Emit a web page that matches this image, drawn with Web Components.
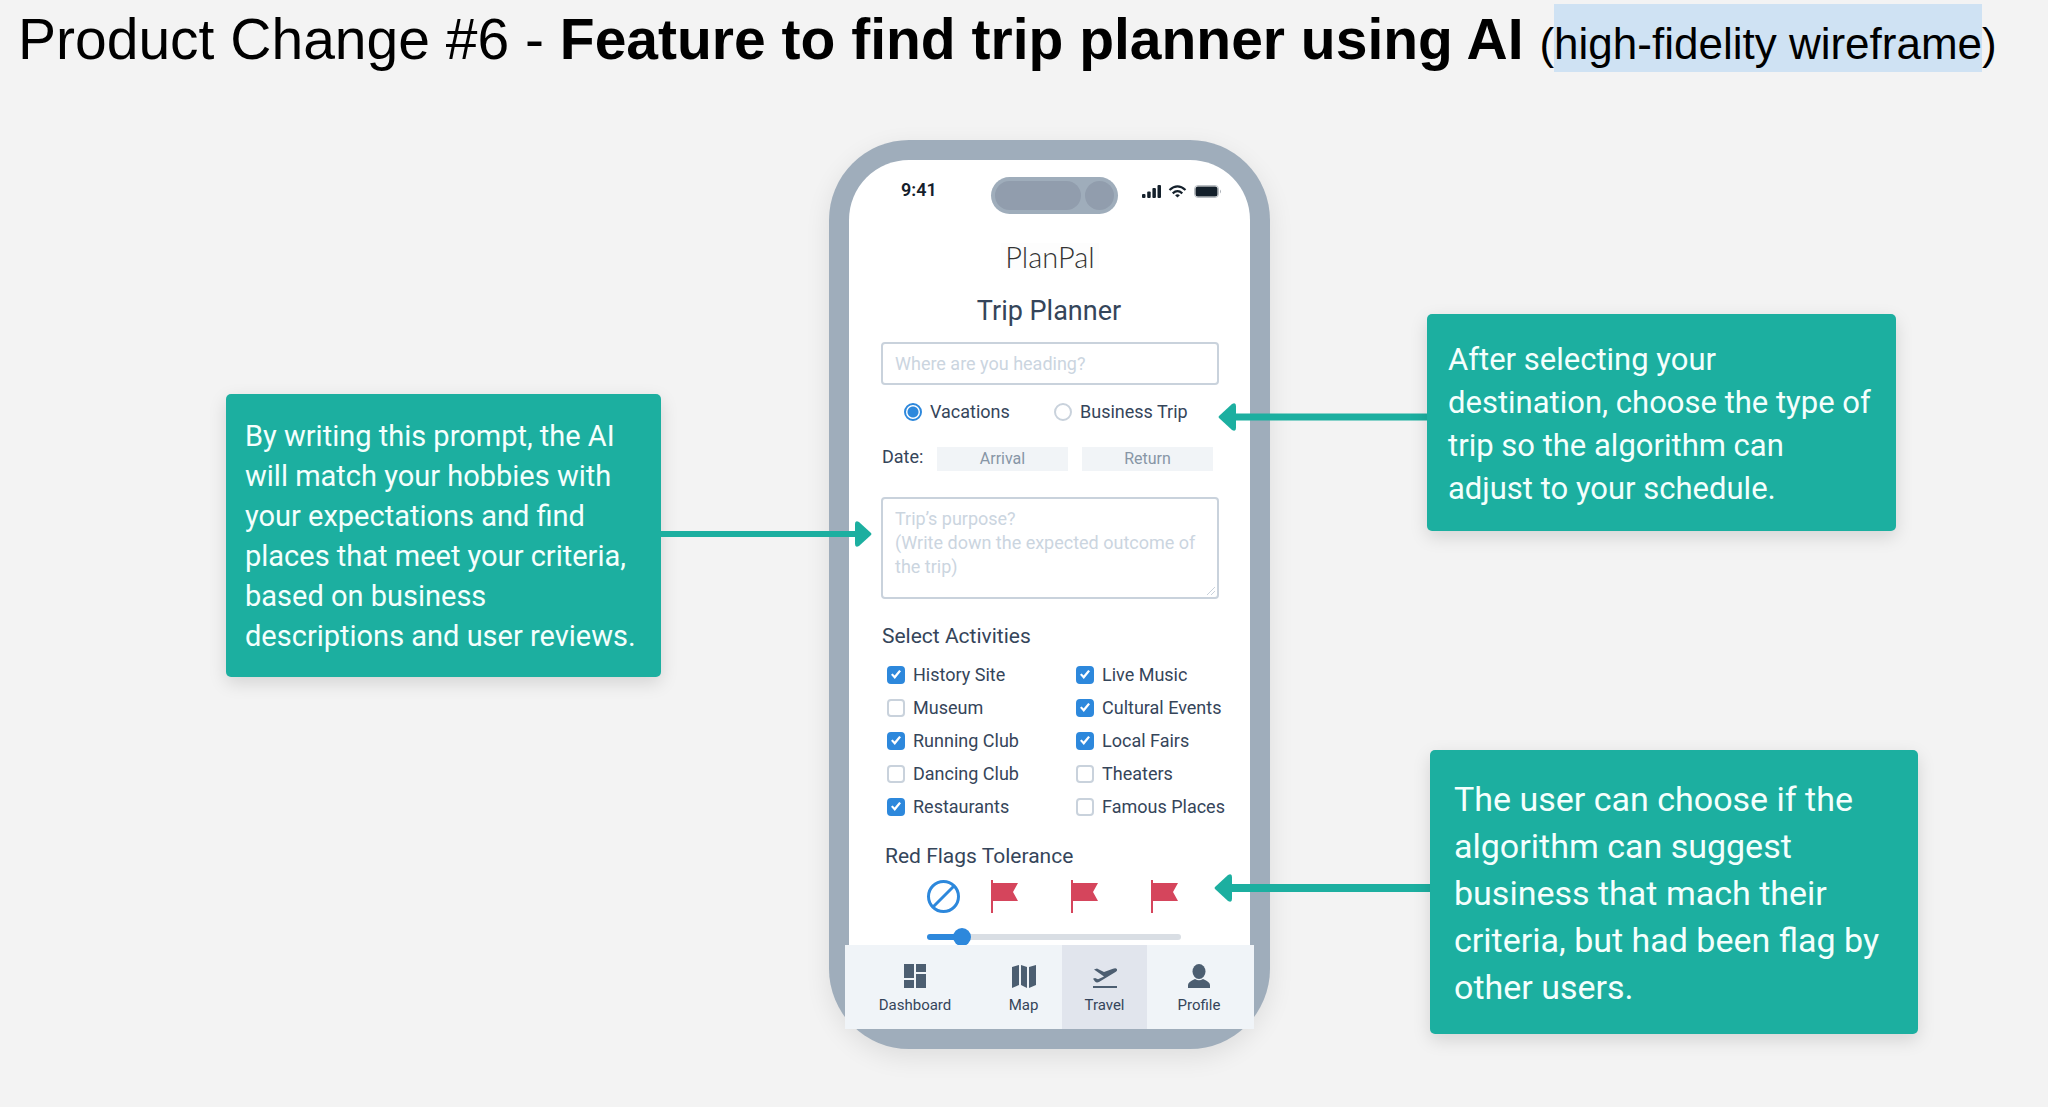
<!DOCTYPE html>
<html lang="en">
<head>
<meta charset="utf-8">
<title>Product Change #6</title>
<style>
  html { background: #f3f3f3; }
  body { margin: 0; font-family: Roboto, "Liberation Sans", sans-serif; color: #35455a; }
</style>
</head>
<body>
<change-slide></change-slide>

<script>
const define = (name, html, setup) => {
  const template = document.createElement('template');
  template.innerHTML = html;
  customElements.define(name, class extends HTMLElement {
    constructor() {
      super();
      this.attachShadow({ mode: 'open' }).append(template.content.cloneNode(true));
    }
    connectedCallback() { if (setup) setup(this, this.shadowRoot); }
  });
};

define('slide-title', `
  <style>
    :host { display: block; padding: 6px 16px 0 18px; }
    h1 { margin: 0; font: 400 57px/66px "Liberation Sans", Arial, sans-serif; color: #000; }
    small { font-size: 44px; line-height: 1; }
    ::slotted(mark) { background: #cfe2f3; color: inherit; padding: 15px 0 4px; }
  </style>
  <h1><slot></slot> <b><slot name="name"></slot></b> <small>(<slot name="note"></slot>)</small></h1>`);

/* Teal note with an arrow that reaches over the phone; "point" is the side the arrow leaves from. */
define('call-out', `
  <style>
    :host { display: flex; align-items: center; }
    :host([point=left]) { flex-direction: row-reverse; justify-content: flex-end; }
    :host([point=right]) { justify-content: flex-end; }
    p { margin: 0; box-sizing: border-box; width: var(--box); padding: var(--pad); background: #1cafa0; color: #f4fffd;
        font-size: var(--size); line-height: var(--line); border-radius: 5px; box-shadow: 0 6px 18px rgba(0,0,0,.13); }
    svg { display: block; flex: none; width: var(--reach); height: 40px; overflow: visible; }
    .r, .l { display: none; }
    :host([point=right]) .r, :host([point=left]) .l { display: block; }
  </style>
  <p><slot></slot></p>
  <svg aria-hidden="true" fill="#1cafa0">
    <g class="r"><path d="M0 15h195v6H0z"/><path d="M194 8q0-4 4-2l12 11q1 1 0 2l-12 11q-4 2-4-2z"/></g>
    <g class="l"></g>
  </svg>`, (host, root) => {
    if (host.getAttribute('point') !== 'left') return;
    const y = +host.getAttribute('tip'), w = +host.getAttribute('shaft');
    root.querySelector('.l').innerHTML =
      `<path d="M16 ${y - w / 2}H216V${y + w / 2}H16z"/>
       <path d="M18 ${y - 11}q0-4-4-2L1 ${y - 1}q-1 1 0 2l13 12q4 2 4-2z"/>`;
  });

define('phone-frame', `
  <style>
    :host { display: flex; flex-direction: column; box-sizing: border-box; padding: 20px; border-radius: 80px;
            background: #9fadbb; box-shadow: 0 8px 26px rgba(0,0,0,.09); }
    .screen { background: #fff; border-radius: 60px 60px 0 0; height: 785px; overflow: hidden; }
    ::slotted(tab-bar) { margin: 0 -4px; }
  </style>
  <div class="screen"><slot></slot></div>
  <slot name="tabs"></slot>`);

define('status-bar', `
  <style>
    :host { display: grid; grid-template-columns: 90px 127px 1fr; height: 37px; padding: 17px 28px 0 52px; color: #14202b; }
    time { font-size: 18px; line-height: 26px; font-weight: 600; }
    .island { display: flex; gap: 4px; box-sizing: border-box; padding: 4px; border-radius: 19px; background: #9fadbb; }
    .island i { flex: 1; border-radius: 15px; background: #919dad; }
    .island i + i { flex: none; width: 29px; }
    svg { justify-self: end; margin-top: 8px; }
  </style>
  <time>9:41</time>
  <div class="island"><i></i><i></i></div>
  <svg width="80" height="14" viewBox="0 0 80 14" fill="#14202b" aria-hidden="true">
    <rect x="0" y="9" width="3.500" height="4" rx="1"/><rect x="5.200" y="6.500" width="3.500" height="6.500" rx="1"/>
    <rect x="10.400" y="3" width="3.500" height="10" rx="1"/><rect x="15.500" y="0" width="3.500" height="13" rx="1"/>
    <g fill="none" stroke="#14202b" stroke-width="2.200"><path d="M27.500 5q8-7.400 16 0"/><path d="M30.700 8.300q4.800-4.200 9.600 0"/></g>
    <path d="M33.100 10.200q2.400-2 4.800 0L35.500 12.600z"/>
    <rect x="52.500" y=".5" width="24" height="12" rx="3.500" fill="none" stroke="#b9bec3"/>
    <rect x="53.500" y="1.500" width="22" height="10" rx="2.500"/><path d="M78 4.500q2 2 0 4z" fill="#a9aeb4"/>
  </svg>`);

define('radio-choice', `
  <style>
    :host { display: block; }
    label { display: flex; align-items: center; gap: 8px; font-size: 18px; line-height: 24px; }
    input { appearance: none; margin: 0; width: 18px; height: 18px; box-sizing: border-box; border: 2px solid #c9d2dc;
            border-radius: 50%; background: #fff; }
    input:checked { border-color: #2d88dc; background: radial-gradient(circle, #2d88dc 5px, #fff 6px); }
  </style>
  <label><input type="radio"><slot></slot></label>`, (host, root) => {
    root.querySelector('input').checked = host.hasAttribute('checked');
  });

define('check-choice', `
  <style>
    :host { display: block; }
    label { display: flex; align-items: center; gap: 8px; font-size: 18px; line-height: 33px; white-space: nowrap; }
    input { appearance: none; margin: 0; width: 18px; height: 18px; box-sizing: border-box; border: 2px solid #c9d2dc;
            border-radius: 4px; background: #fff; display: grid; place-items: center; flex: none; }
    input:checked { border-color: #2d88dc; background: #2d88dc; }
    input:checked::before { content: ""; width: 10px; height: 9px; background: #fff;
            clip-path: polygon(0 52%, 16% 38%, 36% 62%, 82% 0, 100% 14%, 38% 100%); }
  </style>
  <label><input type="checkbox"><slot></slot></label>`, (host, root) => {
    root.querySelector('input').checked = host.hasAttribute('checked');
  });

define('trip-form', `
  <style>
    :host { display: block; padding: 29px 31px 0 32px; }
    .logo { width: max-content; margin: 0 auto; padding: 0 4px; background: #fdfdfd; color: #333;
            font: 300 29px/27px Lato, sans-serif; }
    .brand { display: flex; }
    h2 { margin: 25px 0 15px; padding-right: 2px; text-align: center; font-size: 27px; line-height: 32px; font-weight: 400; }
    h3 { margin: 0 0 0 1px; font-size: 21px; line-height: 26px; font-weight: 400; }
    input.place, textarea { display: block; box-sizing: border-box; width: 100%; margin: 0; border: 2px solid #c9d2dc;
            border-radius: 4px; background: #fff; color: inherit; font: 18px/24px Roboto, sans-serif; outline: 0; }
    input.place { height: 43px; padding: 0 12px; }
    textarea { height: 102px; padding: 8px 12px; resize: none; overflow: hidden; }
    ::placeholder { color: #cbd5df; opacity: 1; }
    .kinds { display: grid; grid-template-columns: 150px 1fr; padding: 15px 0 0 23px; }
    .dates { display: grid; grid-template-columns: 41px 1fr 1fr; column-gap: 14px; margin: 23px 6px 26px 1px; align-items: start; }
    .dates span { font-size: 18px; line-height: 20px; }
    .dates button { height: 24px; border: 0; padding: 0; background: #f1f4f7; color: #8796a6; font: 16px/24px Roboto, sans-serif; }
    .purpose { position: relative; margin-bottom: 24px; }
    .purpose svg { position: absolute; right: 3px; bottom: 3px; }
    .activities { display: grid; grid-template-columns: 189px 1fr; margin: 9px -4px 0 6px; }
    .activities + h3 { margin: 20px 0 0 4px; }
    .level { margin: 11px 38px 0 46px; }
    .marks { display: grid; grid-template-columns: 64px 80px 80px 1fr; }
    .marks svg { display: block; }
    input[type=range] { appearance: none; display: block; width: 100%; height: 18px; margin: 15px 0 0; background: none; }
    input[type=range]::-webkit-slider-runnable-track { height: 6px; border-radius: 3px;
            background: linear-gradient(90deg, #2d88dc 14%, #d9dee4 14%); }
    input[type=range]::-webkit-slider-thumb { appearance: none; width: 18px; height: 18px; margin-top: -6px; border-radius: 50%; background: #2d88dc; }
  </style>
  <div class="brand"><div class="logo">PlanPal</div></div>
  <h2>Trip Planner</h2>
  <input class="place" type="text" placeholder="Where are you heading?" aria-label="Destination">
  <div class="kinds" role="radiogroup" aria-label="Type of trip">
    <radio-choice checked>Vacations</radio-choice><radio-choice>Business Trip</radio-choice>
  </div>
  <div class="dates"><span>Date:</span><button type="button">Arrival</button><button type="button">Return</button></div>
  <div class="purpose">
    <textarea aria-label="Purpose of the trip" placeholder="Trip’s purpose?&#10;(Write down the expected outcome of the trip)"></textarea>
    <svg width="10" height="10" fill="none" stroke="#c9d2dc" aria-hidden="true"><path d="M1 9L9 1M5 9l4-4"/></svg>
  </div>
  <h3>Select Activities</h3>
  <div class="activities">
    <check-choice checked>History Site</check-choice><check-choice checked>Live Music</check-choice>
    <check-choice>Museum</check-choice><check-choice checked>Cultural Events</check-choice>
    <check-choice checked>Running Club</check-choice><check-choice checked>Local Fairs</check-choice>
    <check-choice>Dancing Club</check-choice><check-choice>Theaters</check-choice>
    <check-choice checked>Restaurants</check-choice><check-choice>Famous Places</check-choice>
  </div>
  <h3 id="tolerance">Red Flags Tolerance</h3>
  <div class="level">
    <div class="marks" aria-hidden="true">
      <svg width="33" height="33" fill="none" stroke="#2d88dc" stroke-width="3"><circle cx="16.500" cy="16.500" r="15"/><path d="M6.500 26.500l20-20"/></svg>
      <red-flag></red-flag><red-flag></red-flag><red-flag></red-flag>
    </div>
    <input type="range" min="0" max="100" value="11" aria-labelledby="tolerance">
  </div>`);

define('red-flag', `
  <style>:host { display: block; } svg { display: block; }</style>
  <svg width="28" height="33" fill="#d5455c"><path d="M0 0h2v33H0z"/><path d="M2 3h25l-5 9 5 9H2z"/></svg>`);

const tabIcons = {
  dashboard: '<path d="M1 0h10v14H1zM13 0h10v8H13zM1 16h10v8H1zM13 10h10v14H13z"/>',
  map: '<path d="M0 3l7-2v20l-7 3zM9 1l6 2v21l-6-3zM17 3l7-2v20l-7 3z"/>',
  travel: '<path d="M0 22h24v2H0z"/><path d="M1 5l3-1 7 3.400 9-3.200q3-1 4 .6.500 1.500-1.500 2.600L6 17.500q-2.500 1-4-.5L0 14.200l2-.6 3 1.200 6-2.800z" transform="translate(0 .5)"/>',
  profile: '<ellipse cx="12" cy="7.500" rx="6.500" ry="7.500"/><path d="M1 24v-3q0-3 7-6 4 2.500 8 0 7 3 7 6v3z"/>'
};
define('tab-link', `
  <style>
    :host { display: block; }
    a { display: flex; flex-direction: column; align-items: center; gap: 7px; height: 84px; box-sizing: border-box; padding-top: 19px;
        color: inherit; text-decoration: none; font-size: 15px; line-height: 18px; }
    :host([current]) a { background: #e1e5ed; }
    svg { fill: #4c5e71; }
  </style>
  <a href="#"><svg width="24" height="25" viewBox="0 0 24 25" aria-hidden="true"></svg><slot></slot></a>`, (host, root) => {
    root.querySelector('svg').innerHTML = tabIcons[host.getAttribute('icon')];
    if (host.hasAttribute('current')) root.querySelector('a').setAttribute('aria-current', 'page');
  });

define('tab-bar', `
  <style>
    :host { display: block; background: #f0f4f8; }
    nav { display: grid; grid-template-columns: 140fr 77fr 85fr 104fr; padding-right: 3px; }
  </style>
  <nav aria-label="Main">
    <tab-link icon="dashboard">Dashboard</tab-link><tab-link icon="map">Map</tab-link>
    <tab-link icon="travel" current>Travel</tab-link><tab-link icon="profile">Profile</tab-link>
  </nav>`);

define('change-slide', `
  <style>
    :host { display: block; padding-bottom: 40px; }
    main { display: grid; grid-template-columns: minmax(0, 829fr) 441px minmax(0, 778fr); padding-top: 68px; align-items: start; }
    .side { display: flex; flex-direction: column; position: relative; z-index: 1; }
    .before { padding-top: 254px; margin-right: -43px; }
    .after { padding-top: 174px; margin-left: -56px; gap: 219px; }
    .prompt { --box: 435px; --pad: 22px 16px 21px 19px; --size: 29px; --line: 40px; --reach: 211px; }
    .kind { --box: 469px; --pad: 24px 20px 21px 21px; --size: 31px; --line: 43px; --reach: 209px; padding-left: 4px; }
    .flags { --box: 488px; --pad: 26px 24px 23px; --size: 34px; --line: 47px; --reach: 216px; }
  </style>
  <slide-title>Product Change #6 - <span slot="name">Feature to find trip planner using AI</span><mark slot="note">high-fidelity wireframe</mark></slide-title>
  <main>
    <div class="side before">
      <call-out class="prompt" point="right">By writing this prompt, the AI will match your hobbies with your expectations and find places that meet your criteria, based on business descriptions and user reviews.</call-out>
    </div>
    <phone-frame>
      <status-bar></status-bar>
      <trip-form></trip-form>
      <tab-bar slot="tabs"></tab-bar>
    </phone-frame>
    <div class="side after">
      <call-out class="kind" point="left" tip="14" shaft="7">After selecting your destination, choose the type of trip so the algorithm can adjust to your schedule.</call-out>
      <call-out class="flags" point="left" tip="16" shaft="8">The user can choose if the algorithm can suggest business that mach their criteria, but had been flag by other users.</call-out>
    </div>
  </main>`);
</script>
</body>
</html>
